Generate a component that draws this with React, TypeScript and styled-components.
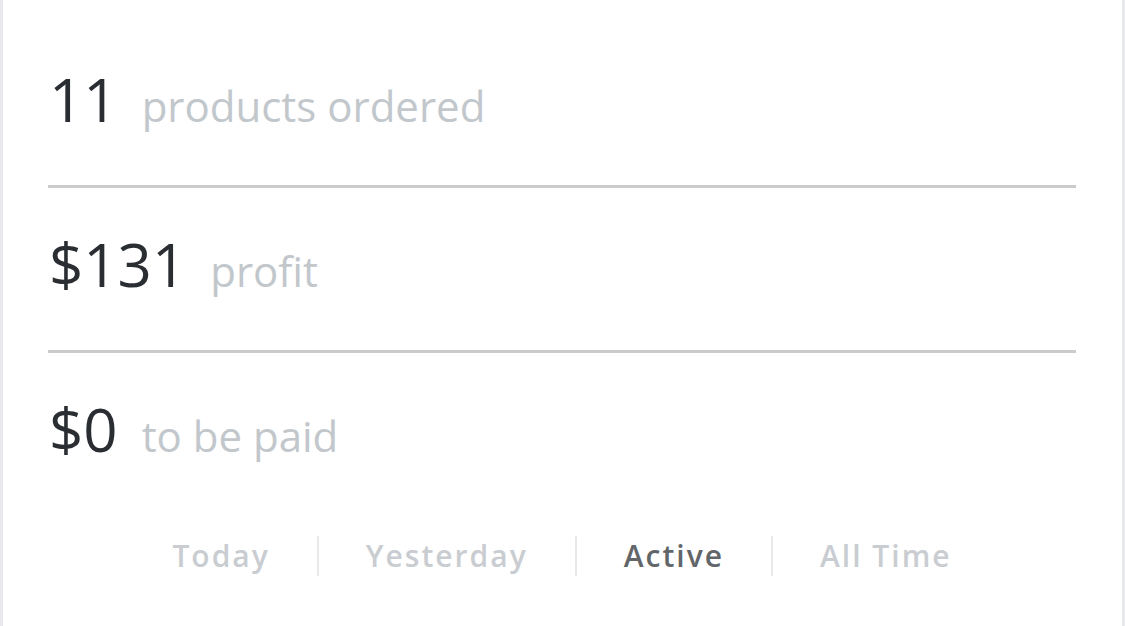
import styled, { createGlobalStyle } from 'styled-components';

const GlobalStyle = createGlobalStyle`
  html, body {
    margin: 0;
    padding: 0;
    background: #ffffff;
  }
  body {
    font-family: 'Open Sans', 'Liberation Sans', sans-serif;
  }
`;

type Stat = { value: string; label: string };

const stats: Stat[] = [
  { value: '11', label: 'products ordered' },
  { value: '$131', label: 'profit' },
  { value: '$0', label: 'to be paid' },
];

const periods = ['Today', 'Yesterday', 'Active', 'All Time'];
const activePeriod = 'Active';

const App = () => {
  return (
    <>
      <GlobalStyle />
      <Card>
        <StatList>
          {stats.map((stat) => (
            <StatRow key={stat.label}>
              <Value>{stat.value}</Value>
              <Label>{stat.label}</Label>
            </StatRow>
          ))}
        </StatList>
        <Tabs>
          {periods.map((period) => (
            <Tab key={period} $active={period === activePeriod}>
              {period}
            </Tab>
          ))}
        </Tabs>
      </Card>
    </>
  );
};

const Card = styled.div`
  box-sizing: border-box;
  width: 1125px;
  height: 626px;
  padding: 23px 46px 0 45px;
  background-color: #ffffff;
  border-left: 3px solid #e8e9ec;
  border-right: 3px solid #e8e9ec;
  display: flex;
  flex-direction: column;
`;

const StatList = styled.div`
  display: flex;
  flex-direction: column;
`;

const StatRow = styled.div`
  display: flex;
  flex-direction: row;
  align-items: baseline;
  height: 165px;
  box-sizing: border-box;
  padding-top: 35px;
  padding-left: 1px;
  border-bottom: 3px solid #cbcbcb;

  &:last-child {
    border-bottom: none;
  }
`;

const Value = styled.span`
  font-size: 60px;
  font-weight: 400;
  color: #2a2e33;
  line-height: normal;
`;

const Label = styled.span`
  margin-left: 24px;
  font-size: 42px;
  font-weight: 400;
  color: #c2c7cc;
  line-height: normal;
`;

const Tabs = styled.div`
  display: flex;
  flex-direction: row;
  justify-content: center;
  margin-top: 18px;
`;

const Tab = styled.div<{ $active: boolean }>`
  height: 40px;
  line-height: 40px;
  padding: 0 47px;
  font-size: 30px;
  font-weight: 600;
  letter-spacing: 2px;
  color: ${(p) => (p.$active ? '#636669' : '#c9cdd1')};
  border-left: 2px solid #e6e8ea;

  &:first-child {
    border-left: none;
  }
`;

export default App;
